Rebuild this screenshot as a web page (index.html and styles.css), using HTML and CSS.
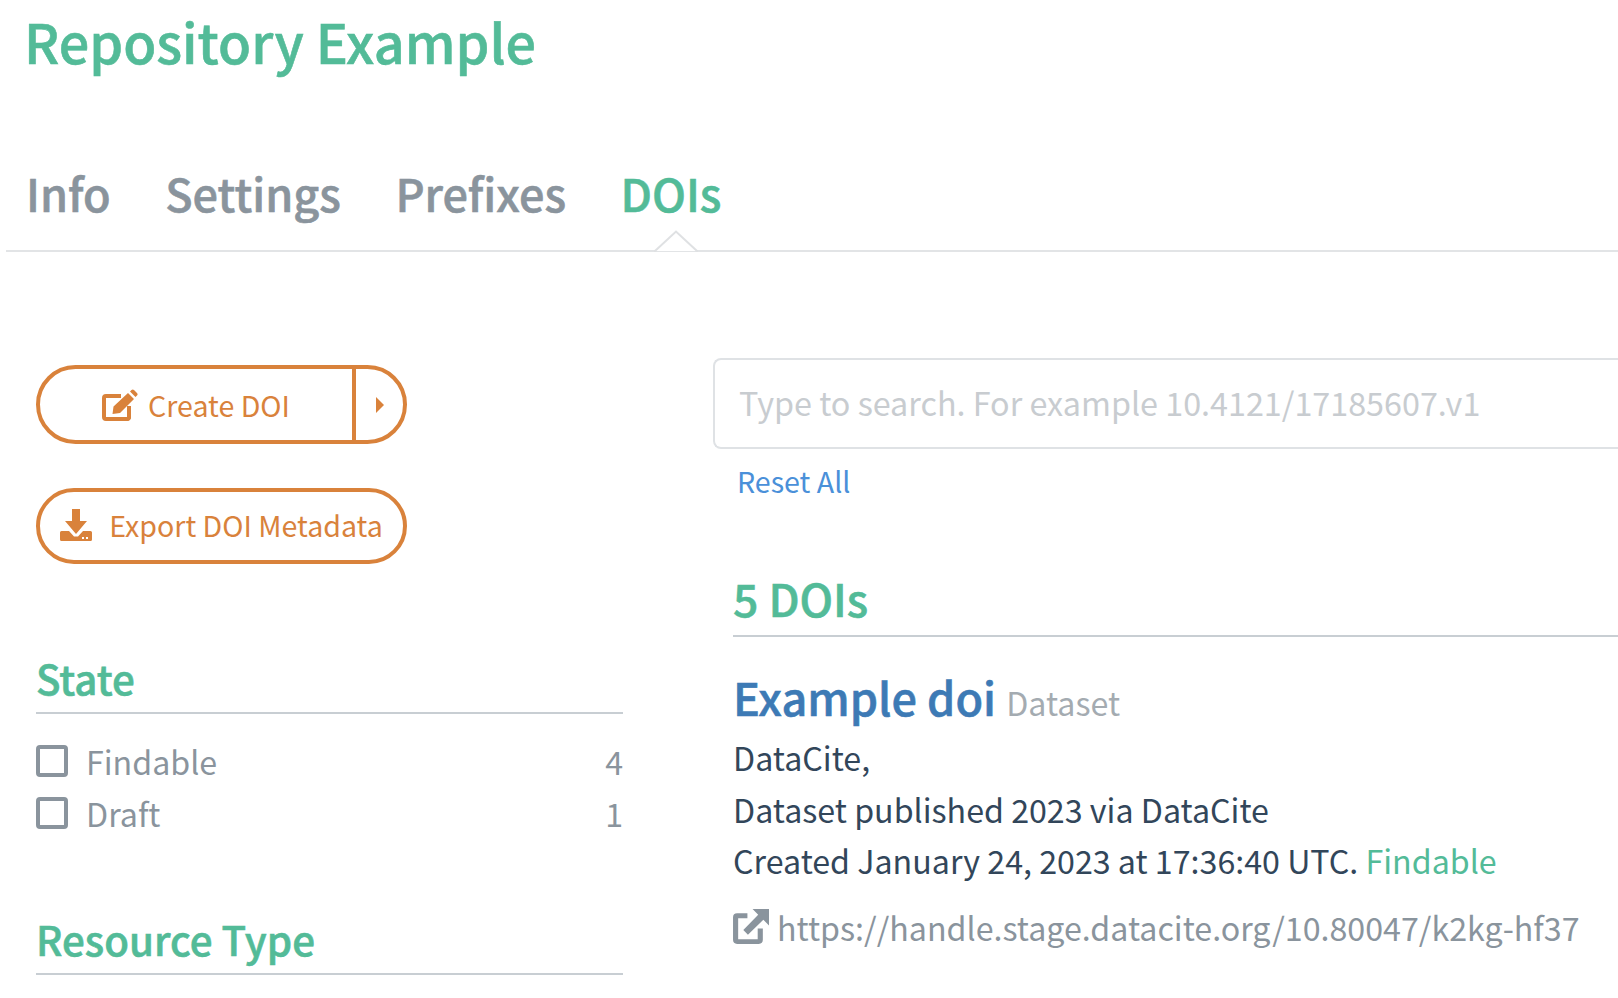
FILE: index.html
```html
<!DOCTYPE html>
<html lang="en">
<head>
<meta charset="utf-8">
<title>Repository Example</title>
<link rel="stylesheet" href="styles.css">
</head>
<body>
<h1 class="title">Repository Example</h1>
<nav class="tabs">
  <a class="tab">Info</a>
  <a class="tab">Settings</a>
  <a class="tab">Prefixes</a>
  <a class="tab active">DOIs</a>
  <svg class="notch" width="44" height="22" viewBox="0 0 44 22"><path d="M0 21h1L22 1.500 43 21h1" fill="#fff" stroke="#dfe1e3" stroke-width="2"/></svg>
</nav>
<main class="layout">
  <aside class="side">
    <div class="btn split">
      <span class="btn-main">
        <svg class="ico" width="36" height="32" viewBox="0 0 36 32"><path d="M19 7H4a2 2 0 0 0-2 2v19a2 2 0 0 0 2 2h22a2 2 0 0 0 1-1V17" fill="none" stroke="#d9823b" stroke-width="4"/><path d="M10.500 25l1-7.500L26 4l6 6-14 14zM28 2.500l1.500-1.500a1.800 1.800 0 0 1 2.500 0l3 3a1.800 1.800 0 0 1 0 2.500L33.500 8z" fill="#d9823b"/></svg>
        Create DOI
      </span>
      <span class="btn-caret"><svg width="8" height="16" viewBox="0 0 8 16"><path d="M0 0l8 8-8 8z" fill="#d9823b"/></svg></span>
    </div>
    <div class="btn export">
      <svg class="ico" width="32" height="32" viewBox="0 0 32 32"><path d="M12 0h8v12h7L16 25 5 12h7zM0 23.500A1.500 1.500 0 0 1 1.500 22H9l5 5.500h4l5-5.500h7.500a1.500 1.500 0 0 1 1.500 1.500v7a1.500 1.500 0 0 1-1.500 1.500H1.500A1.500 1.500 0 0 1 0 30.500z" fill="#d9823b"/><path d="M22 28h2v2h-2zM26 28h2v2h-2z" fill="#fff"/></svg>
      Export DOI Metadata
    </div>
    <section class="facet state">
      <h4 class="facet-title">State</h4>
      <ul class="facet-list">
        <li class="facet-row"><span class="check"></span><span class="label">Findable</span><span class="count">4</span></li>
        <li class="facet-row"><span class="check"></span><span class="label">Draft</span><span class="count">1</span></li>
      </ul>
    </section>
    <section class="facet">
      <h4 class="facet-title">Resource Type</h4>
    </section>
  </aside>
  <section class="content">
    <div class="search">Type to search. For example 10.4121/17185607.v1</div>
    <a class="reset">Reset All</a>
    <h3 class="count-title">5 DOIs</h3>
    <h3 class="doi-title"><a class="doi-link">Example doi</a> <small class="doi-type">Dataset</small></h3>
    <p class="meta">DataCite,</p>
    <p class="meta">Dataset published 2023 via DataCite</p>
    <p class="meta">Created January 24, 2023 at 17:36:40 UTC. <span class="findable">Findable</span></p>
    <p class="url">
      <svg class="ext" width="37" height="37" viewBox="0 0 36 36"><path d="M15 5H5a4 4 0 0 0-4 4v22a4 4 0 0 0 4 4h21a4 4 0 0 0 4-4V20h-5v10.500H6v-20.500h9z" fill="#8a949d"/><path d="M20 1h16v16l-5.500-5.500L15.500 26 11 21.500 25.500 6.500z" fill="#8a949d"/></svg>
      https://handle.stage.datacite.org/10.80047/k2kg-hf37
    </p>
  </section>
</main>
</body>
</html>
```

FILE: styles.css
```css
* { box-sizing: border-box; }
html, body { height: 100%; }
body {
  margin: 0;
  overflow: hidden;
  background: #fff;
  font-family: "Noto Sans CJK SC", "Noto Sans", sans-serif;
  color: #32465a;
}
.title {
  margin: 0;
  padding: 5px 0 0 24px;
  height: 106px;
  font-size: 53.900px;
  line-height: 72px;
  font-weight: 500;
  color: #53bb98;
  -webkit-text-stroke: 0.6px #53bb98;
}
.tabs {
  position: relative;
  display: flex;
  gap: 54.500px;
  margin: 0 0 0 6px;
  padding: 55px 0 0 20px;
  height: 146px;
  border-bottom: 2px solid #e2e4e6;
}
.tab {
  font-size: 45px;
  line-height: 64px;
  font-weight: 500;
  color: #8a949d;
  -webkit-text-stroke: 0.6px #8a949d;
}
.tab.active { color: #53bb98; -webkit-text-stroke-color: #53bb98; }
.notch { position: absolute; left: 648px; bottom: -2px; }
.layout {
  display: flex;
  padding: 106px 0 0 36px;
}
.side { flex: 0 0 587px; }
.content { flex: 0 0 995px; margin-left: 90px; }
.btn {
  display: flex;
  align-items: center;
  width: 371px;
  border: 4px solid #d9823b;
  border-radius: 40px;
  color: #d9823b;
  font-size: 28.600px;
  overflow: hidden;
}
.split { height: 79px; margin-top: 7px; }
.btn-main {
  flex: 1;
  height: 100%;
  display: flex;
  align-items: center;
  justify-content: center;
  gap: 10px;
  border-right: 4px solid #d9823b;
}
.btn-caret { flex: 0 0 47px; display: flex; justify-content: center; }
.export { height: 76px; margin-top: 44px; padding-bottom: 3px; justify-content: center; gap: 17px; }
.facet { margin: 0; }
.state { margin-top: 87px; height: 261px; }
.facet-title {
  margin: 0;
  height: 63px;
  font-size: 40.300px;
  line-height: 54px;
  font-weight: 500;
  color: #53bb98;
  -webkit-text-stroke: 0.6px #53bb98;
  border-bottom: 2px solid #c8ced3;
}
.facet-list { list-style: none; margin: 21px 0 0; padding: 0; }
.facet-row {
  display: flex;
  align-items: center;
  height: 52px;
  font-size: 32.200px;
  color: #8a949d;
}
.check {
  width: 32px;
  height: 32px;
  border: 4px solid #8a949d;
  border-radius: 4px;
  margin-right: 18px;
}
.label { flex: 1; }
.search {
  width: 100%;
  height: 91px;
  padding-left: 24px;
  border: 2px solid #dfe2e5;
  border-right: 0;
  border-radius: 8px 0 0 8px;
  font-size: 32.300px;
  line-height: 85px;
  color: #c8ccd0;
}
.reset {
  display: block;
  margin: 10px 0 0 24px;
  font-size: 28.600px;
  line-height: 43px;
  color: #4a90d9;
}
.count-title {
  margin: 67px 0 0 20px;
  height: 68px;
  font-size: 44.500px;
  line-height: 58px;
  font-weight: 500;
  color: #53bb98;
  -webkit-text-stroke: 0.6px #53bb98;
  border-bottom: 2px solid #c8ced3;
}
.doi-title {
  margin: 30px 0 0 20px;
  font-size: 45px;
  line-height: 60px;
  font-weight: 500;
}
.doi-link { color: #3d7ab5; -webkit-text-stroke: 0.6px #3d7ab5; }
.doi-type { font-size: 32.200px; font-weight: 400; color: #a4abb1; }
.meta {
  margin: 0 0 0 20px;
  font-size: 32.200px;
  line-height: 51.600px;
}
.findable { color: #53bb98; }
.url {
  display: flex;
  align-items: center;
  gap: 8px;
  margin: 14px 0 0 19px;
  font-size: 32.200px;
  line-height: 52px;
  color: #8a949d;
}
```
